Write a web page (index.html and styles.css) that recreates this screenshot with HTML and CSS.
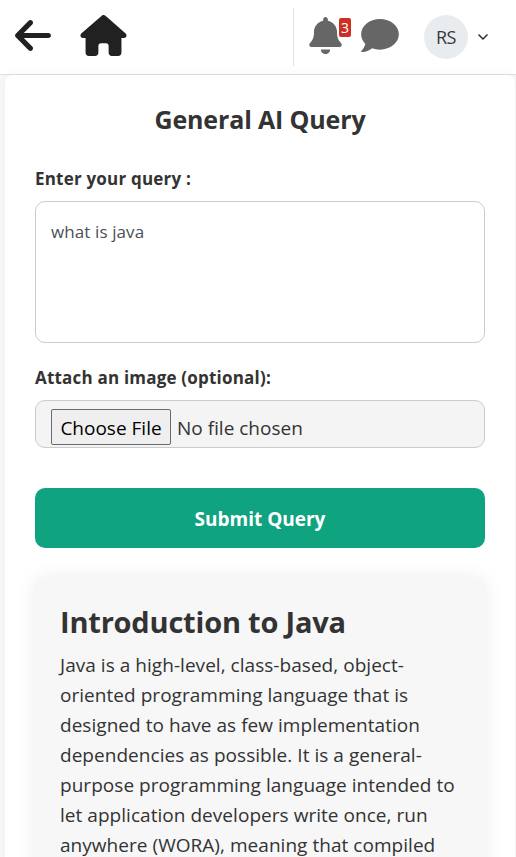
FILE: index.html
```html
<!DOCTYPE html>
<html lang="en">
<head>
  <meta charset="UTF-8">
  <meta name="viewport" content="width=device-width, initial-scale=1.0">
  <title>General AI Query</title>
  <link rel="stylesheet" href="styles.css">
</head>
<body>

<header class="navbar">
  <div class="nav-left">
    <svg class="icon-back" viewBox="0 0 448 512"><path d="M9.4 233.4c-12.5 12.5-12.5 32.8 0 45.3l160 160c12.5 12.5 32.8 12.5 45.3 0s12.5-32.8 0-45.3L109.2 288 416 288c17.7 0 32-14.3 32-32s-14.3-32-32-32l-306.7 0L214.6 118.6c12.5-12.5 12.5-32.8 0-45.3s-32.8-12.5-45.3 0l-160 160z"/></svg>
    <svg class="icon-home" viewBox="0 0 576 512"><path d="M575.8 255.5c0 18-15 32.1-32 32.1h-32l.7 160.2c0 2.7-.2 5.4-.5 8.1V472c0 22.1-17.9 40-40 40H456c-1.1 0-2.2 0-3.3-.1c-1.4 .1-2.8 .1-4.2 .1H416 392c-22.1 0-40-17.9-40-40V448 384c0-17.7-14.3-32-32-32H256c-17.7 0-32 14.3-32 32v64 24c0 22.1-17.9 40-40 40H160 128.1c-1.5 0-3-.1-4.5-.2c-1.2 .1-2.4 .2-3.6 .2H104c-22.1 0-40-17.9-40-40V360c0-.9 0-1.9 .1-2.8V287.6H32c-18 0-32-14-32-32.1c0-9 3-17 10-24L266.4 8c7-7 15-8 22-8s15 2 21 7L564.8 231.5c8 7 12 15 11 24z"/></svg>
  </div>
  <div class="nav-right">
    <div class="bell">
      <svg class="icon-bell" viewBox="0 0 448 512"><path d="M224 0c-17.7 0-32 14.3-32 32V51.2C119 66 64 130.6 64 208v18.8c0 47-17.3 92.4-48.5 127.6l-7.4 8.3c-8.4 9.4-10.4 22.9-5.3 34.4S19.4 416 32 416H416c12.6 0 24-7.4 29.2-18.9s3.1-25-5.3-34.4l-7.4-8.3C401.3 319.2 384 273.9 384 226.8V208c0-77.4-55-142-128-156.8V32c0-17.7-14.3-32-32-32zm45.3 493.3c12-12 18.7-28.3 18.7-45.3H224 160c0 17 6.7 33.3 18.7 45.3s28.3 18.7 45.3 18.7s33.3-6.7 45.3-18.7z"/></svg>
      <span class="badge">3</span>
    </div>
    <svg class="icon-chat" viewBox="0 32 512 448"><path d="M256 32C114.6 32 0 125.1 0 240c0 49.6 21.4 95 57 130.7C44.5 421.1 2.7 466 2.2 466.5c-2.2 2.3-2.8 5.7-1.5 8.7S4.8 480 8 480c66.3 0 116-31.8 140.6-51.4 32.7 12.3 69 19.4 107.4 19.4 141.4 0 256-93.1 256-208S397.4 32 256 32z"/></svg>
    <div class="avatar">RS</div>
    <svg class="icon-chevron" viewBox="0 0 12 8"><path d="M1.500 1.500 6 6l4.500-4.500"/></svg>
  </div>
</header>

<main class="container">
  <h2 class="title">General AI Query</h2>
  <form class="query-form">
    <label class="label label-query" for="query">Enter your query :</label>
    <textarea class="query" id="query" spellcheck="false">what is java</textarea>
    <label class="label label-file" for="image">Attach an image (optional):</label>
    <input class="file" type="file" id="image">
    <button class="submit" type="button">Submit Query</button>
  </form>
  <div class="response">
    <h1 class="response-title">Introduction to Java</h1>
    <p class="response-text">Java is a high-level, class-based, object-oriented programming language that is designed to have as few implementation dependencies as possible. It is a general-purpose programming language intended to let application developers write once, run anywhere (WORA), meaning that compiled</p>
  </div>
</main>

</body>
</html>
```
FILE: styles.css
```css
* {
  box-sizing: border-box;
}

body {
  display: flex;
  flex-direction: column;
  margin: 0;
  height: 100vh;
  overflow: hidden;
  background-color: #f8f8f8;
  color: #333;
  font-family: "Open Sans", "Segoe UI", sans-serif;
}

.navbar {
  display: flex;
  flex-shrink: 0;
  justify-content: space-between;
  align-items: center;
  height: 75px;
  padding: 0 27px 3px 15px;
  background-color: #fff;
  border-bottom: 1px solid #dee2e6;
}

.nav-left {
  display: flex;
  align-items: center;
  gap: 29px;
  fill: #212121;
}

.icon-back {
  width: 36px;
  height: 41px;
}

.icon-home {
  width: 47px;
  height: 41px;
}

.nav-right {
  display: flex;
  align-items: center;
  height: 58px;
  margin-top: 2px;
  padding-left: 15px;
  border-left: 1px solid #dee2e6;
  fill: #666;
}

.bell {
  position: relative;
  width: 52px;
  height: 40px;
}

.icon-bell {
  display: block;
  width: 33px;
  height: 37px;
}

.badge {
  position: absolute;
  top: 1px;
  left: 30px;
  width: 12px;
  height: 19px;
  border-radius: 2px;
  background-color: #cc3022;
  color: #fff;
  font-size: 14px;
  line-height: 19px;
  text-align: center;
}

.icon-chat {
  width: 38px;
  height: 33px;
  margin-bottom: 3px;
}

.avatar {
  width: 44px;
  height: 44px;
  margin-left: 25px;
  border-radius: 50%;
  background-color: #e9ecef;
  color: #343a40;
  font-size: 18px;
  letter-spacing: -0.5px;
  line-height: 45px;
  text-align: center;
}

.icon-chevron {
  width: 12px;
  height: 8px;
  margin-left: 9px;
  fill: none;
  stroke: #212529;
  stroke-width: 1.4;
}

.container {
  flex: 1;
  min-height: 0;
  overflow: hidden;
  width: 510px;
  margin-left: 5px;
  padding: 26px 30px 0;
  border-radius: 8px 8px 0 0;
  background-color: #fff;
  box-shadow: 0 0 10px rgba(0, 0, 0, 0.05);
}

.title {
  margin: 0 0 30px;
  font-size: 25px;
  font-weight: 700;
  letter-spacing: -0.15px;
  line-height: 36px;
  text-align: center;
}

.query-form {
  display: flex;
  flex-direction: column;
}

.label {
  font-size: 17px;
  font-weight: 700;
  letter-spacing: 0.2px;
  line-height: 24px;
}

.label-query {
  margin-bottom: 10px;
}

.query {
  height: 142px;
  padding: 16px 15px 15px;
  border: 1px solid #ccc;
  border-radius: 10px;
  outline: none;
  color: #495057;
  font-family: inherit;
  font-size: 17px;
  letter-spacing: 0.1px;
  line-height: 28px;
}

.query::-webkit-resizer {
  background: none;
}

.label-file {
  margin: 23px 0 10px;
}

.file {
  height: 48px;
  padding: 8px 15px;
  border: 1px solid #ccc;
  border-radius: 10px;
  background-color: #f4f4f4;
  color: #333;
  font-family: inherit;
  font-size: 19px;
}

.file::file-selector-button {
  width: 120px;
  height: 36px;
  margin: 0 6px 0 0;
  padding: 1px 0 0;
  border: 1px solid #6b6b6b;
  border-radius: 2px;
  background-color: #efefef;
  color: #000;
  font-family: inherit;
  font-size: 19px;
}

.submit {
  height: 60px;
  margin-top: 40px;
  padding-top: 3px;
  border: none;
  border-radius: 10px;
  background-color: #10a37f;
  color: #fff;
  font-family: inherit;
  font-size: 19px;
  font-weight: 700;
}

.response {
  height: 400px;
  margin-top: 30px;
  padding: 25px;
  border-radius: 10px;
  background-color: #f7f7f7;
  box-shadow: 0 0 20px rgba(0, 0, 0, 0.08);
}

.response-title {
  margin: 0 0 9px;
  font-size: 29px;
  font-weight: 700;
  letter-spacing: -0.2px;
  line-height: 38px;
}

.response-text {
  margin: 0;
  font-size: 19px;
  letter-spacing: 0.04px;
  line-height: 30px;
}
```
